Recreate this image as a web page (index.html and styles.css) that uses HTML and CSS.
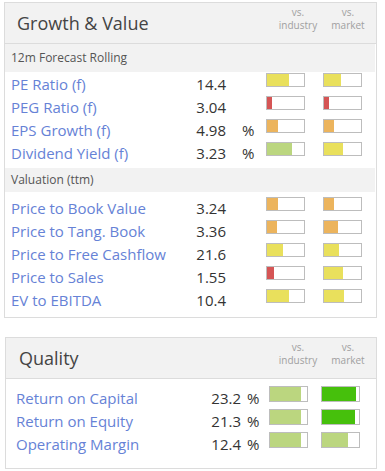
FILE: index.html
```html
<!DOCTYPE html>
<html>
<head>
<meta charset="utf-8">
<link rel="stylesheet" href="styles.css">
</head>
<body>
<section class="panel panel-gv">
  <header class="phead">
    <h2 class="ptitle">Growth &amp; Value</h2>
    <div class="vs"><span>vs.</span><span>industry</span></div>
    <div class="vs"><span>vs.</span><span>market</span></div>
  </header>
  <div class="sub sub-first">12m Forecast Rolling</div>
  <div class="group">
    <div class="row"><span class="lbl">PE Ratio (f)</span><span class="val">14.4</span><span class="pct"></span><span class="bar"><i class="y" style="width:22px"></i></span><span class="bar"><i class="y" style="width:17px"></i></span></div>
    <div class="row"><span class="lbl">PEG Ratio (f)</span><span class="val">3.04</span><span class="pct"></span><span class="bar"><i class="r" style="width:5px"></i></span><span class="bar"><i class="r" style="width:5px"></i></span></div>
    <div class="row"><span class="lbl">EPS Growth (f)</span><span class="val">4.98</span><span class="pct">%</span><span class="bar"><i class="o" style="width:11px"></i></span><span class="bar"><i class="o" style="width:10px"></i></span></div>
    <div class="row"><span class="lbl">Dividend Yield (f)</span><span class="val">3.23</span><span class="pct">%</span><span class="bar"><i class="lg" style="width:25px"></i></span><span class="bar"><i class="y" style="width:19px"></i></span></div>
  </div>
  <div class="sub sub-second">Valuation (ttm)</div>
  <div class="group group-last">
    <div class="row"><span class="lbl">Price to Book Value</span><span class="val">3.24</span><span class="pct"></span><span class="bar"><i class="o" style="width:11px"></i></span><span class="bar"><i class="o" style="width:10px"></i></span></div>
    <div class="row"><span class="lbl">Price to Tang. Book</span><span class="val">3.36</span><span class="pct"></span><span class="bar"><i class="o" style="width:10px"></i></span><span class="bar"><i class="o" style="width:14px"></i></span></div>
    <div class="row"><span class="lbl">Price to Free Cashflow</span><span class="val">21.6</span><span class="pct"></span><span class="bar"><i class="y" style="width:16px"></i></span><span class="bar"><i class="y" style="width:15px"></i></span></div>
    <div class="row"><span class="lbl">Price to Sales</span><span class="val">1.55</span><span class="pct"></span><span class="bar"><i class="r" style="width:7px"></i></span><span class="bar"><i class="y" style="width:19px"></i></span></div>
    <div class="row"><span class="lbl">EV to EBITDA</span><span class="val">10.4</span><span class="pct"></span><span class="bar"><i class="y" style="width:22px"></i></span><span class="bar"><i class="y" style="width:20px"></i></span></div>
  </div>
</section>

<section class="panel panel-q">
  <header class="phead">
    <h2 class="ptitle">Quality</h2>
    <div class="vs"><span>vs.</span><span>industry</span></div>
    <div class="vs"><span>vs.</span><span>market</span></div>
  </header>
  <div class="qgroup">
    <div class="row"><span class="lbl">Return on Capital</span><span class="val">23.2</span><span class="pct">%</span><span class="bar"><i class="lg" style="width:31px"></i></span><span class="bar"><i class="g" style="width:34px"></i></span></div>
    <div class="row"><span class="lbl">Return on Equity</span><span class="val">21.3</span><span class="pct">%</span><span class="bar"><i class="lg" style="width:31px"></i></span><span class="bar"><i class="g" style="width:33px"></i></span></div>
    <div class="row"><span class="lbl">Operating Margin</span><span class="val">12.4</span><span class="pct">%</span><span class="bar"><i class="lg" style="width:31px"></i></span><span class="bar"><i class="lg" style="width:26px"></i></span></div>
  </div>
</section>
</body>
</html>
```
FILE: styles.css
```css
* { box-sizing: border-box; }
html, body { margin: 0; padding: 0; background: #fff; }
body {
  width: 385px;
  font-family: "Open Sans", "Liberation Sans", sans-serif;
  color: #333;
  padding-top: 2px;
}
.panel {
  border: 1px solid #dcdcdc;
  background: #fff;
}
.panel-gv { margin-left: 4px; width: 373px; }
.panel-q { margin-left: 5px; width: 372px; margin-top: 19px; }

.phead {
  display: flex;
  align-items: flex-start;
  height: 41px;
  background: #f2f2f2;
  border-bottom: 1px solid #dcdcdc;
}
.ptitle {
  margin: 0;
  flex: 1;
  font-size: 18px;
  font-weight: 400;
  color: #444;
  line-height: 40px;
  padding-left: 12px;
}
.panel-q .ptitle { padding-left: 13px; }
.vs {
  display: flex;
  flex-direction: column;
  align-items: center;
  width: 50px;
  font-size: 10px;
  line-height: 13px;
  color: #a0a0a0;
  padding-top: 3px;
}
.panel-gv .vs:last-child { margin-right: 3px; }
.panel-q .vs:last-child { margin-right: 3px; }

.sub {
  background: #f2f2f2;
  color: #555;
  margin-right: 1px;
  padding-left: 6px;
  font-size: 12px;
}
.sub-first { height: 28px; line-height: 28px; }
.sub-second { height: 24px; line-height: 24px; margin-top: 4px; }

.sub-second + .group { padding-top: 4px; }
.group-last { padding-bottom: 6px; }

.row {
  display: flex;
  align-items: flex-start;
  height: 23px;
  font-size: 15px;
}
.lbl {
  color: #6682d6;
  line-height: 24px;
}
.val, .pct { line-height: 24px; color: #333; }

.group .lbl { width: 221px; padding-left: 6px; }
.group .val { width: 0; flex: 0 0 0; display: flex; justify-content: flex-end; white-space: nowrap; }
.group .pct { width: 40px; padding-left: 16px; }
.group .bar { margin-top: 1px; }
.group .bar + .bar { margin-left: 18px; }

.qgroup { padding-top: 7px; padding-bottom: 13px; }
.qgroup .lbl { width: 235px; padding-left: 10px; }
.qgroup .val { width: 0; flex: 0 0 0; display: flex; justify-content: flex-end; white-space: nowrap; }
.qgroup .pct { width: 28px; padding-left: 6px; }
.qgroup .bar { height: 16px; margin-top: 0; }
.qgroup .bar + .bar { margin-left: 13px; }

.bar {
  display: block;
  width: 39px;
  height: 14px;
  border: 1px solid #bdbdbd;
  background: #fff;
  flex: 0 0 auto;
}
.bar i { display: block; height: 100%; }
.bar .y { background: #e9e05c; }
.bar .r { background: #d55555; }
.bar .o { background: #ecb45d; }
.bar .lg { background: #bbd67f; }
.bar .g { background: #46c00c; }
```
